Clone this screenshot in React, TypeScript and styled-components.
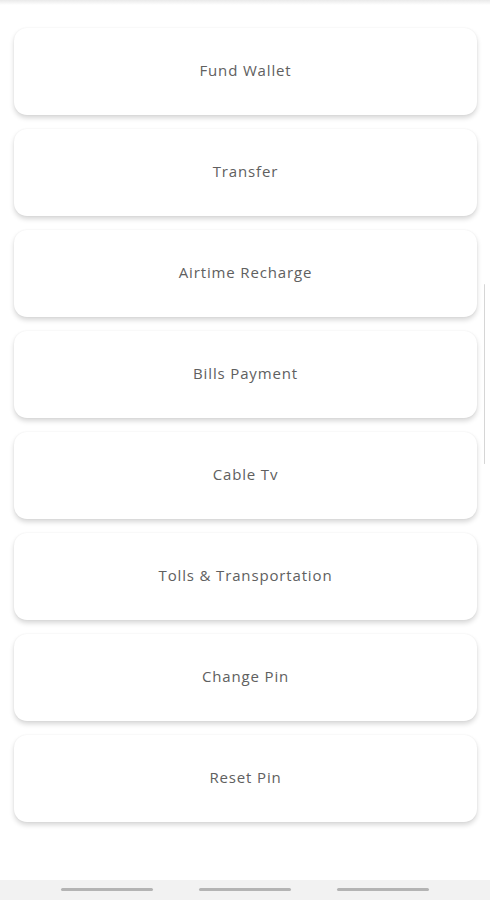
import React from 'react';
import styled, { createGlobalStyle } from 'styled-components';

const GlobalStyle = createGlobalStyle`
    body {
        margin: 0;
        background: #fff;
        font-family: "Open Sans", "Liberation Sans", sans-serif;
    }
`;

const Page = styled.div`
    position: relative;
    width: 490px;
    height: 900px;
    display: flex;
    flex-direction: column;
    background: #fff;
    overflow: hidden;
`;

const TopShade = styled.div`
    height: 5px;
    background: linear-gradient(#e9e9e9, #fff);
`;

const List = styled.div`
    display: flex;
    flex-direction: column;
    gap: 14px;
    padding: 23px 13px 0 14px;
`;

const Card = styled.button`
    height: 87px;
    border: none;
    border-radius: 13px;
    background: #fff;
    box-shadow: 0 3px 5px rgba(0, 0, 0, 0.16), 0 0 2px rgba(0, 0, 0, 0.06);
    display: flex;
    align-items: center;
    justify-content: center;
    padding: 0 0 3px;
    font-family: "Open Sans", "Liberation Sans", sans-serif;
    font-size: 15px;
    letter-spacing: 0.85px;
    color: #606060;
    cursor: pointer;
`;

const Spacer = styled.div`
    flex: 1;
`;

const NavBar = styled.div`
    height: 20px;
    background: #f2f2f2;
    display: flex;
    justify-content: center;
    align-items: flex-start;
    gap: 46px;
    padding-top: 8px;
    box-sizing: border-box;
`;

const NavLine = styled.div`
    width: 92px;
    height: 3px;
    border-radius: 2px;
    background: #b4b4b4;
`;

const ScrollEdge = styled.div`
    position: absolute;
    right: 5px;
    top: 284px;
    width: 1px;
    height: 180px;
    border-radius: 1px;
    background: #d6d6d6;
`;

const items = [
    'Fund Wallet',
    'Transfer',
    'Airtime Recharge',
    'Bills Payment',
    'Cable Tv',
    'Tolls & Transportation',
    'Change Pin',
    'Reset Pin',
];

const App: React.FC = () => {
    return (
        <Page>
            <GlobalStyle />
            <TopShade />
            <List>
                {items.map((label) => (
                    <Card key={label}>{label}</Card>
                ))}
            </List>
            <Spacer />
            <NavBar>
                <NavLine />
                <NavLine />
                <NavLine />
            </NavBar>
            <ScrollEdge />
        </Page>
    );
};

export default App;
